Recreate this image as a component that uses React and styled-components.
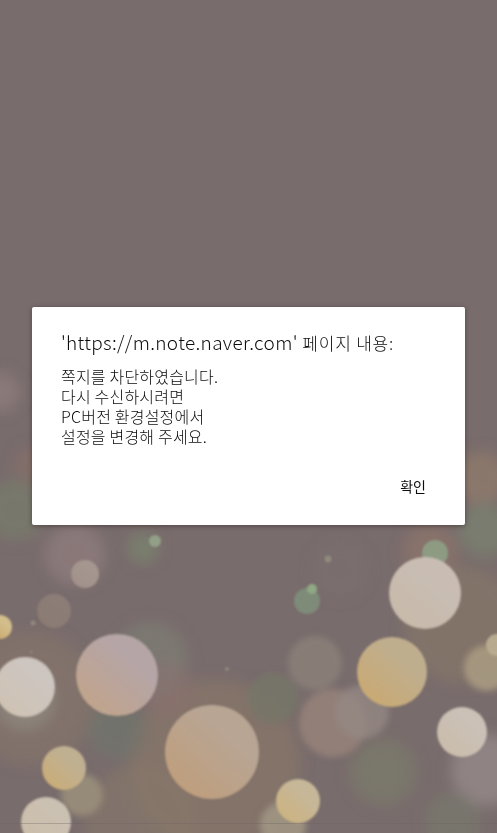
import React from "react";
import styled, { createGlobalStyle } from "styled-components";

const GlobalStyle = createGlobalStyle`
  html, body { margin: 0; padding: 0; height: 100%; background: #776a6a; }
  #root { height: 100%; }
`;

const Page = styled.div`
  position: relative;
  width: 497px;
  height: 833px;
  overflow: hidden;
  background: #796c6c;
  display: flex;
  align-items: center;
  justify-content: center;
  padding-bottom: 1px;
  box-sizing: border-box;
  font-family: "Noto Sans CJK KR", "Noto Sans", sans-serif;
`;

const Backdrop = styled.svg`
  position: absolute;
  inset: 0;
  width: 497px;
  height: 833px;
`;

const Dialog = styled.section`
  position: relative;
  box-sizing: border-box;
  width: 433px;
  height: 218px;
  background: #fff;
  border-radius: 2px;
  box-shadow: 0 1px 5px rgba(50, 35, 35, 0.55);
  padding: 23px 39px 0 29px;
  display: flex;
  flex-direction: column;
  color: #0c0c0c;
`;

const Title = styled.h1`
  margin: 0;
  height: 24px;
  font-size: 17px;
  line-height: 24px;
  font-weight: 300;
  letter-spacing: 0.8px;
  white-space: nowrap;
`;

const Url = styled.span`
  font-size: 19px;
  font-weight: 300;
  letter-spacing: 0.33px;
`;

const Message = styled.p`
  margin: 12px 0 0;
  font-size: 16px;
  line-height: 20px;
  font-weight: 300;
  letter-spacing: 0.2px;
`;

const Line = styled.span`
  display: block;
  white-space: nowrap;
`;

const Actions = styled.div`
  margin-top: auto;
  padding-bottom: 29px;
  display: flex;
  justify-content: flex-end;
`;

const Confirm = styled.button`
  border: 0;
  padding: 0;
  background: none;
  color: inherit;
  font: 400 14px/20px "Noto Sans CJK KR", sans-serif;
`;

// [cx, cy, r, colour, opacity]
const soft = [
  [30, 698, 66, "#8a7868", 0.5], [215, 765, 85, "#8a7868", 0.6], [140, 820, 55, "#87786a", 0.6],
  [462, 625, 58, "#877868", 0.65], [430, 552, 27, "#96796a", 0.55], [487, 770, 36, "#948787", 0.85],
  [117, 730, 29, "#6e766c", 0.6], [150, 660, 38, "#7c7c74", 0.75], [165, 688, 28, "#8a7270", 0.6],
  [75, 555, 30, "#8c7a7b", 0.9], [143, 548, 15, "#79826f", 0.85], [383, 772, 33, "#7b7c6b", 0.7],
  [453, 820, 28, "#78796c", 0.7], [485, 530, 27, "#797e70", 0.9], [15, 510, 30, "#78796b", 0.9],
  [32, 465, 17, "#8a6f68", 0.6], [0, 392, 20, "#8f7d7c", 0.75], [481, 478, 26, "#8e7a6a", 0.8],
  [340, 570, 28, "#7e7070", 0.4], [25, 700, 30, "#8f8880", 0.8],
];

const mid = [
  [273, 698, 25, "#767567", 0.85], [315, 663, 27, "#8a7f78", 0.9], [333, 723, 34, "#96827a", 0.85],
  [362, 712, 27, "#958a85", 0.75], [82, 795, 21, "#988c7a", 0.95], [283, 825, 23, "#9e9382", 0.95],
  [487, 668, 23, "#a59880", 0.95],
];

// [cx, cy, r, light side colour, warm side colour]
const sharp = [
  [0, 627, 12, "#d2bd8c", "#cba668"], [54, 611, 17, "#8c7d77", "#8b7a72"], [85, 574, 14, "#a5968f", "#a1918a"],
  [155, 541, 6, "#93a088", "#93a088"], [307, 601, 13, "#7e8b79", "#7e8b79"], [312, 589, 5, "#8fa984", "#8fa984"],
  [435, 553, 13, "#8d9b83", "#8d9b83"],
  [425, 593, 36, "#c9bdb3", "#c8baa9"], [392, 672, 35, "#bfae8e", "#caa970"], [462, 732, 25, "#cbc1b7", "#cabca9"],
  [25, 687, 30, "#cdc5bf", "#cfc2b2"], [117, 675, 41, "#b5a5a6", "#c2a488"], [212, 752, 47, "#b8a594", "#c09e7a"],
  [64, 768, 22, "#bfb092", "#cbad76"], [298, 801, 22, "#c6b799", "#cdb37e"], [46, 822, 25, "#cbc1b2", "#cbbda8"],
  [497, 645, 11, "#b8aa8e", "#b8aa8e"],
];

const motes = [[33, 623, 2.5], [31, 652, 1.5], [227, 669, 2], [328, 559, 3.5]];

export default function App() {
  return (
    <>
      <GlobalStyle />
      <Page>
        <Backdrop viewBox="0 0 497 833" aria-hidden="true">
          <defs>
            <filter id="wide" x="-40%" y="-40%" width="180%" height="180%"><feGaussianBlur stdDeviation="7" /></filter>
            <filter id="midblur" x="-30%" y="-30%" width="160%" height="160%"><feGaussianBlur stdDeviation="3" /></filter>
            <filter id="edge" x="-20%" y="-20%" width="140%" height="140%"><feGaussianBlur stdDeviation="1.3" /></filter>
            <filter id="mote" x="-100%" y="-100%" width="300%" height="300%"><feGaussianBlur stdDeviation="0.8" /></filter>
            {sharp.map(([, , , light, warm], i) => (
              <linearGradient key={i} id={`orb${i}`} x1="0.85" y1="0.1" x2="0.1" y2="0.95">
                <stop offset="0.25" stopColor={light} />
                <stop offset="1" stopColor={warm} />
              </linearGradient>
            ))}
          </defs>
          <g filter="url(#wide)">
            {soft.map(([cx, cy, r, fill, opacity], i) => (
              <circle key={i} cx={cx} cy={cy} r={r} fill={fill} opacity={opacity} />
            ))}
          </g>
          <g filter="url(#midblur)">
            {mid.map(([cx, cy, r, fill, opacity], i) => (
              <circle key={i} cx={cx} cy={cy} r={r} fill={fill} opacity={opacity} />
            ))}
          </g>
          <g filter="url(#edge)">
            {sharp.map(([cx, cy, r], i) => (
              <circle key={i} cx={cx} cy={cy} r={r} fill={`url(#orb${i})`} />
            ))}
          </g>
          <g filter="url(#mote)">
            {motes.map(([cx, cy, r], i) => (
              <circle key={i} cx={cx} cy={cy} r={r} fill="#8f8a7c" />
            ))}
          </g>
          <line x1="0" x2="497" y1="823.5" y2="823.5" stroke="#6f6262" strokeOpacity="0.35" />
        </Backdrop>
        <Dialog role="alertdialog">
          <Title><Url>'https://m.note.naver.com'</Url> 페이지 내용:</Title>
          <Message>
            <Line>쪽지를 차단하였습니다.</Line>
            <Line>다시 수신하시려면</Line>
            <Line>PC버전 환경설정에서</Line>
            <Line>설정을 변경해 주세요.</Line>
          </Message>
          <Actions><Confirm>확인</Confirm></Actions>
        </Dialog>
      </Page>
    </>
  );
}
